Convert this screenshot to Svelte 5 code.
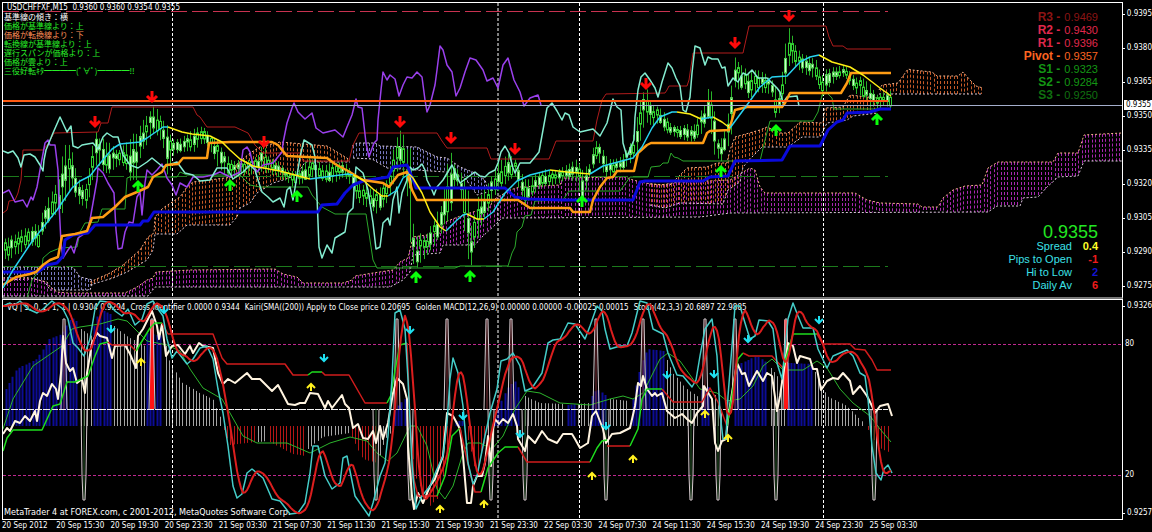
<script lang="ts">
	type Point = number[];

	const PITCH = 3.38;
	const LAST_BAR = 892;

	const prices = [
		"0.9395", "0.9380", "0.9365", "0.9350", "0.9335",
		"0.9320", "0.9305", "0.9290", "0.9275"
	];

	const times = [
		"20 Sep 2012", "20 Sep 15:30", "20 Sep 19:30", "20 Sep 23:30",
		"21 Sep 03:30", "21 Sep 07:30", "21 Sep 11:30", "21 Sep 15:30",
		"21 Sep 19:30", "21 Sep 23:30", "22 Sep 03:30", "24 Sep 07:30",
		"24 Sep 11:30", "24 Sep 15:30", "24 Sep 19:30", "24 Sep 23:30",
		"25 Sep 03:30"
	];

	const signals = [
		{ text: "基準線の傾き：横", tone: "flat" },
		{ text: "価格が基準線より：上", tone: "up" },
		{ text: "価格が転換線より：下", tone: "down" },
		{ text: "転換線が基準線より：上", tone: "up" },
		{ text: "遅行スパンが価格より：上", tone: "up" },
		{ text: "価格が雲より：上", tone: "up" },
		{ text: "三役好転ｷﾀ━━━━(ﾟ∀ﾟ)━━━━!!", tone: "up" }
	];

	const pivots = [
		{ name: "R3", value: "0.9469", tone: "r3" },
		{ name: "R2", value: "0.9430", tone: "r" },
		{ name: "R1", value: "0.9396", tone: "r" },
		{ name: "Pivot", value: "0.9357", tone: "pivot" },
		{ name: "S1", value: "0.9323", tone: "s" },
		{ name: "S2", value: "0.9284", tone: "s" },
		{ name: "S3", value: "0.9250", tone: "s3" }
	];

	const stats = [
		{ name: "Spread", value: "0.4", tone: "yellow" },
		{ name: "Pips to Open", value: "-1", tone: "red" },
		{ name: "Hi to Low", value: "2", tone: "blue" },
		{ name: "Daily Av", value: "6", tone: "red" }
	];

	const indicators = [
		"VQ | 5, 0, 2, 1, 1 | 0.9304 0.9294",
		"Cross Identifier 0.0000 0.9344",
		"Kairi(SMA((200)) Apply to Close price 0.20695",
		"Golden MACD(12,26,9) 0.00000 0.00000 -0.00025 0.00015",
		"Stoch(42,3,3) 20.6897 22.9885"
	];

	const days = [172.5, 498, 579.5, 823.5];

	// "x,y x,y" -> [[x, y], ...]
	const parse = (s: string): Point[] =>
		s.trim().split(/\s+/).map((p) => p.split(",").map(Number));

	// linear interpolation of column k at x
	function at(points: Point[], x: number, k = 1) {
		if (x <= points[0][0]) return points[0][k];
		for (let i = 1; i < points.length; i++) {
			const a = points[i - 1];
			const b = points[i];
			if (x <= b[0]) {
				return a[k] + ((b[k] - a[k]) * (x - a[0])) / (b[0] - a[0] || 1);
			}
		}
		return points[points.length - 1][k];
	}

	const noise = (n: number) => {
		const v = Math.sin(n * 12.9898) * 43758.5453;
		return v - Math.floor(v);
	};

	const snap = (n: number) => Math.floor(n) + 0.5;

	const upper = "3,213 7,210 9,201 15,200 18,193 21,180 23,150 43,150 48,144 54,133 98,132 101,123 108,123 112,107 193,107 197,115 200,117 207,127 235,127 248,133 251,138 255,145 263,153 301,153 303,161 349,161 353,145 359,133 437,133 442,141 447,148 487,148 491,159 549,159 556,141 593,141 597,120 602,100 606,94 665,93 667,90 669,86 687,86 689,80 693,53 743,53 749,26 826,26 829,37 833,46 843,46 847,49 891,49";
	const lower = "27,298 32,280 38,272 42,268 43,258 50,252 60,248 77,247 80,232 85,223 98,222 102,209 125,209 127,178 130,177 177,177 180,172 187,175 240,175 250,185 260,187 308,187 312,195 322,207 335,214 366,214 370,240 373,260 377,268 455,268 460,266 508,266 512,253 515,247 517,232 522,227 525,216 531,215 535,201 563,200 569,191 620,191 630,177 648,177 651,167 660,166 663,163 668,163 671,153 674,157 678,158 683,161 760,161 765,140 770,121 813,121 818,112 822,95 827,93 832,98 834,109 891,109";
	const kijun = "3,285 16,277 30,274 36,272 43,265 50,260 58,257 62,236 75,234 87,231 92,218 103,217 115,207 125,197 137,192 148,187 153,177 162,172 166,165 178,164 183,158 207,158 209,143 230,142 272,142 278,145 287,156 327,158 335,164 348,171 363,180 383,183 389,187 398,175 407,172 412,190 417,200 518,200 530,208 570,208 573,212 590,212 593,200 600,187 607,178 613,177 617,171 634,171 638,153 647,145 651,143 703,143 707,133 710,131 729,130 735,110 747,107 782,107 785,103 790,93 841,93 847,83 851,73 891,73";
	const slow = "3,272 38,272 47,265 57,263 63,256 65,240 73,235 88,233 95,225 140,225 143,221 148,221 154,212 318,212 322,205 337,204 345,193 353,185 363,181 388,177 393,167 407,165 412,177 416,188 505,188 515,197 527,199 563,200 633,200 640,182 645,181 703,181 710,177 728,176 735,161 782,160 790,146 820,146 828,130 837,122 843,120 847,113 870,112 880,109 891,109";
	const aqua = "3,151 8,153 13,151 18,158 21,167 24,155 30,154 35,157 40,165 43,171 44,160 46,150 53,133 60,117 67,132 71,126 73,146 78,148 82,145 93,143 98,149 103,137 107,133 113,137 118,137 121,148 123,155 130,165 138,168 147,162 152,158 163,167 177,162 185,173 193,175 200,181 210,180 217,168 227,168 233,179 243,172 250,165 255,170 258,180 262,192 268,197 273,202 280,198 284,207 287,190 290,187 293,200 295,188 300,157 304,140 312,145 315,157 317,197 319,247 322,258 327,245 332,253 335,238 345,232 348,213 353,208 354,190 356,167 363,173 368,190 373,223 376,249 380,247 383,223 388,218 390,225 393,200 397,187 399,213 402,193 407,180 410,167 413,170 418,168 422,164 425,170 427,180 432,190 434,195 437,187 443,180 452,165 460,183 468,177 475,172 480,176 485,177 489,173 495,170 498,163 501,152 505,146 509,153 513,168 515,173 520,163 530,163 535,157 539,152 543,130 547,108 552,103 557,111 562,120 565,113 569,115 573,127 580,132 593,129 600,136 607,123 611,107 613,99 617,107 621,110 623,143 627,157 630,149 634,140 635,117 638,90 641,77 645,73 650,80 655,88 658,97 662,82 668,63 672,68 676,78 680,86 683,110 686,112 690,97 692,73 695,46 700,48 705,65 708,57 712,59 718,59 722,68 725,67 728,86 733,78 738,82 743,73 747,75 752,70 758,78 767,78 777,88 780,92 783,103 787,97 797,96 799,106";
	const chikou = "3,193 9,190 15,202 23,200 27,207 31,197 33,200 37,187 40,170 45,143 48,140 50,145 55,145 58,170 59,203 61,243 63,258 68,250 71,246 74,253 78,238 87,232 90,220 93,203 97,180 98,168 103,173 108,183 114,193 116,230 118,249 122,248 125,232 129,222 133,223 137,197 140,192 142,215 145,183 147,170 152,175 157,170 162,164 167,178 172,185 176,195 180,183 187,187 193,177 203,177 213,175 220,172 230,177 240,172 243,150 247,147 250,152 253,165 257,172 263,165 273,163 282,152 283,143 287,123 292,108 294,103 298,112 305,119 312,113 316,128 323,133 335,130 343,137 347,127 352,115 356,99 358,107 362,108 366,143 369,157 374,143 377,140 378,120 381,90 383,72 387,80 390,75 395,79 399,96 403,85 407,77 412,78 417,72 422,77 425,100 427,112 430,105 435,85 437,70 440,46 443,50 447,65 452,72 456,96 460,88 465,72 470,58 476,60 483,70 487,81 493,78 498,88 503,65 508,58 514,80 520,92 524,106 530,98 538,95 541,105";

	const average = [
		["cyan", "3,288 13,270 33,240 57,210 72,188 80,181 90,176 97,167 112,149 120,144 140,142 147,138 163,127 168,127"],
		["yellow", "168,127 182,132 192,134 210,136 222,142 230,150 240,159 253,166 280,171 310,179"],
		["cyan", "310,179 325,177 348,174 353,175"],
		["yellow", "353,175 363,180 373,189 382,196 388,196"],
		["cyan", "388,196 397,190 403,178 409,174"],
		["yellow", "409,174 413,178 422,193 430,212 440,227 446,231"],
		["cyan", "446,231 457,220 463,215 467,214"],
		["yellow", "467,214 477,219 484,219"],
		["cyan", "484,219 493,212 505,193 517,181 530,175 550,170"],
		["yellow", "550,170 567,172 590,174"],
		["cyan", "590,174 603,166 633,158 642,147 652,128 660,117 672,112 677,112"],
		["yellow", "677,112 690,114 701,119"],
		["cyan", "701,119 713,117"],
		["yellow", "713,117 722,122 730,128"],
		["cyan", "730,128 747,105 760,87 772,77 787,76 800,62 810,57 819,55"],
		["yellow", "819,55 832,62 850,67 863,75 880,88 891,96"]
	];

	const clouds = [
		{
			kind: "lavender",
			top: "3,267 73,267 80,277 93,280",
			bottom: "3,280 35,279 45,282 50,290 90,290 93,282"
		},
		{
			kind: "purple",
			top: "3,278 30,278 47,282 50,287 57,292 67,293 125,293 137,287 147,280 153,278 156,272 190,270 275,269 283,274 297,277 303,283 343,283 352,280 355,276 373,273 393,270 400,262 408,258 413,237 440,233 445,222 463,215 480,210 490,207 493,200 510,190 520,187 560,185 563,178 625,177 633,180 645,183 660,185 680,182 730,180 735,177 750,168 755,170 760,187 765,193 855,193 867,200 880,203 918,204 922,207 938,207 943,198 953,190 965,186 982,185 988,168 998,162 1053,162 1058,153 1078,153 1084,135 1122,133",
			bottom: "3,296 148,296 155,287 390,287 403,280 410,272 413,255 440,253 443,245 475,245 482,237 497,223 502,218 700,217 730,213 985,212 988,212 997,206 1020,206 1023,198 1038,197 1047,187 1055,180 1057,177 1078,176 1084,161 1122,161"
		},
		{
			kind: "orange",
			top: "90,282 110,273 123,265 140,250 148,237 154,233 155,217 163,208 180,197 187,187 193,182 233,177 236,165 250,153 260,147 280,142 327,146 337,152 350,160",
			bottom: "90,285 113,278 127,272 147,260 153,250 155,234 177,234 187,225 230,225 237,217 240,208 250,203 257,193 273,183 283,180 297,175 305,162 350,162"
		},
		{
			kind: "lavender",
			top: "352,146 357,143 375,143 380,146 417,147 437,157 447,158 460,167 475,173 485,180 488,190",
			bottom: "353,158 372,159 387,168 430,171 447,172 465,178 477,195 488,192"
		},
		{
			kind: "orange",
			top: "650,184 670,185 678,177 687,168 707,167 717,163 727,163 730,150 735,137 760,130 767,127 780,133 788,133 800,122 823,123 825,108 843,107 850,95 867,97 878,98",
			bottom: "650,205 665,208 680,203 723,204 728,190 740,182 743,167 752,157 762,147 788,147 802,137 820,137 827,123 847,120 853,116 878,113"
		},
		{
			kind: "orange",
			top: "879,90 882,85 898,83 908,69 912,70 932,72 937,76 958,76 963,72 970,80 976,86 983,88",
			bottom: "879,94 983,94"
		}
	].map((c) => {
		const top = parse(c.top);
		const bottom = parse(c.bottom);
		const bars = [];
		for (let x = top[0][0] + 1; x <= top[top.length - 1][0]; x += PITCH) {
			bars.push(`M${snap(x)} ${at(top, x).toFixed(1)}V${at(bottom, x).toFixed(1)}`);
		}
		return { ...c, bars: bars.join("") };
	});

	// x,high,low of the price band
	const band = parse(
		"5,240,258 10,237,259 15,236,254 20,232,252 25,230,248 30,228,246 35,225,245 40,226,248 42,215,235 46,205,226 50,195,220 55,190,212 58,178,215 61,185,217 63,150,210 67,148,195 72,150,185 77,175,200 82,185,205 87,185,209 91,160,190 95,133,165 100,140,165 104,142,172 110,145,172 115,150,168 120,150,165 125,145,165 130,140,178 137,135,180 141,125,150 147,118,145 152,108,135 155,108,132 160,115,138 165,125,150 168,130,180 173,140,155 180,140,152 187,135,150 195,130,150 203,127,142 210,135,148 217,140,165 222,150,170 228,158,175 233,162,178 240,160,174 250,160,175 260,155,172 263,145,170 270,160,173 277,160,175 285,170,180 293,172,186 300,170,184 308,160,178 315,160,175 322,165,180 330,165,182 338,163,180 345,162,176 352,172,186 357,180,200 362,185,203 368,188,206 373,190,210 378,190,212 383,185,208 388,180,200 392,160,190 396,140,170 400,133,165 405,140,180 408,155,200 411,150,240 414,225,262 416,240,270 420,235,262 425,238,258 430,230,250 437,215,240 442,205,230 446,180,220 450,150,215 454,165,185 458,170,185 462,175,200 466,180,245 469,200,262 471,230,264 474,220,250 478,200,235 483,195,220 488,185,210 493,175,200 497,165,190 503,160,185 509,155,180 515,160,175 520,170,190 525,180,205 530,180,198 537,175,190 545,170,185 552,172,185 560,170,182 568,165,178 576,160,180 583,170,200 590,165,175 594,145,165 598,140,155 603,150,172 608,160,178 613,160,172 620,158,172 628,150,165 634,135,158 638,115,150 642,95,130 647,90,120 652,105,125 660,108,122 665,115,132 672,125,135 680,127,138 687,125,140 693,128,142 700,115,135 705,105,125 709,85,115 714,105,150 718,140,158 722,140,160 727,125,145 731,95,140 735,58,85 740,65,90 745,70,88 750,75,100 757,70,90 765,75,92 772,80,95 776,90,118 780,95,110 784,60,95 787,38,75 790,28,60 795,45,65 802,55,72 810,58,75 817,62,80 822,78,97 827,70,90 835,68,80 845,66,76 855,78,92 862,78,95 870,85,105 877,95,108 885,93,105 891,92,108"
	);

	const candles = [];
	for (let i = 0, x = 5; x <= LAST_BAR; i++, x += PITCH) {
		const high = at(band, x, 1);
		const low = at(band, x, 2);
		const range = low - high;
		const top = high + range * (0.15 + 0.3 * noise(i));
		const height = Math.max(2, range * (0.2 + 0.35 * noise(i + 500)));
		candles.push({
			x: snap(x),
			high: high - range * 0.1 * noise(i + 90),
			low: low + range * 0.1 * noise(i + 40),
			top,
			height,
			bear: noise(i + 900) > 0.5
		});
	}

	const sells = parse("95,122 152,97 264,142 400,122 451,138 515,149 646,84 735,43 789,16");
	const buys = parse("138,186 230,185 297,196 416,277 470,276 582,201 721,171 776,130 877,119");

	const histogram = [
		["blue", "6,389 17,369 37,359 50,339 62,334 70,320 75,318 79,324"],
		["grey", "81,329 92,336"],
		["blue", "94,326 100,309 111,314"],
		["grey", "114,326 127,336 145,346"],
		["blue", "147,333 163,336"],
		["grey", "166,346 170,363 183,383 200,393 213,399 221,419"],
		["red", "224,430 230,445 255,442"],
		["grey", "258,442 268,441"],
		["red", "270,442 293,454 306,456"],
		["grey", "308,449 323,437 350,433"],
		["red", "352,437 363,459 378,463"],
		["grey", "380,455 385,440 393,430"],
		["blue", "395,409 408,396"],
		["red", "410,440 417,480 430,506 438,498 443,480 450,450"],
		["blue", "456,421 463,421"],
		["red", "468,440 471,450 477,476 483,449 490,430"],
		["blue", "495,416 507,389 515,381 522,393"],
		["grey", "525,396 540,403 565,404"],
		["blue", "568,405 576,404"],
		["grey", "578,404 589,403"],
		["blue", "592,396 597,389 607,396"],
		["grey", "610,399 630,401"],
		["blue", "633,399 642,363 648,349 664,351"],
		["grey", "667,360 673,373 687,389 700,398"],
		["blue", "702,389 712,386"],
		["grey", "715,395 725,420"],
		["blue", "735,366 757,356 768,363"],
		["grey", "771,368 785,385"],
		["blue", "788,363 812,364"],
		["grey", "815,372 827,396 847,406 865,424"],
		["red", "868,430 880,448 891,453"]
	].map(([kind, line]) => {
		const points = parse(line);
		let d = "";
		for (let x = points[0][0]; x <= points[points.length - 1][0]; x += PITCH) {
			d += `M${snap(x)} 426V${at(points, x).toFixed(1)}`;
		}
		return { kind, d };
	});

	const spikesUp = [64, 152, 397, 447, 487, 511, 596, 643, 705, 735, 786];
	const spikesHot = [152, 786];
	const spikesDown = [84, 376, 410, 491, 525, 606, 691, 718, 776, 874];

	const cream = "3,434 7,428 10,431 15,421 20,423 25,416 30,421 35,411 37,421 40,401 43,393 47,396 52,384 56,389 58,399 61,373 63,336 66,363 70,371 73,368 77,383 82,379 85,393 87,373 92,343 97,333 100,336 107,338 112,358 115,346 125,345 130,354 136,368 138,336 143,329 148,319 152,311 157,326 159,339 162,324 166,356 172,346 178,345 185,354 190,346 193,353 199,343 203,346 213,348 218,373 223,384 228,379 235,383 247,373 252,379 260,379 272,391 278,385 288,404 295,405 300,403 305,403 310,393 318,394 325,408 328,401 332,408 342,395 345,404 349,408 353,428 358,424 363,438 368,439 373,431 376,443 380,426 383,439 388,423 393,393 397,378 403,384 407,399 408,446 412,496 414,509 418,493 423,503 430,486 435,479 443,456 447,413 453,416 460,429 463,456 467,503 471,503 473,486 477,476 482,476 485,463 488,436 491,466 493,429 495,419 499,424 503,419 508,423 513,414 517,426 518,439 525,451 528,436 535,443 542,431 548,439 557,443 563,434 572,434 575,439 580,448 588,443 592,416 596,411 603,429 606,443 612,434 620,433 630,428 635,406 638,383 641,386 643,376 647,389 652,396 655,393 657,396 662,393 667,411 675,418 682,414 687,419 692,423 697,413 703,406 704,386 712,399 715,443 718,451 722,441 726,439 728,419 732,393 737,363 742,374 745,373 749,386 757,371 763,381 767,373 772,376 777,411 780,396 783,376 788,343 793,346 797,363 800,356 810,359 813,369 817,369 821,390 827,381 833,378 838,379 843,373 850,381 853,394 860,386 867,396 872,406 875,413 880,406 888,404 892,416";
	const stochMain = "3,306 10,303 13,306 20,301 28,309 37,313 43,309 52,301 63,309 68,319 73,343 78,348 84,356 90,339 95,309 100,301 108,302 115,311 122,316 128,309 135,325 142,319 147,304 153,301 158,309 163,316 167,339 172,358 177,351 187,364 193,359 200,348 207,346 213,359 218,389 223,413 228,446 233,486 237,498 242,494 247,473 252,469 263,478 272,499 280,501 290,514 298,513 305,503 310,473 313,446 318,446 325,476 332,489 340,483 343,458 347,456 351,476 355,496 362,506 369,516 373,503 380,476 385,463 388,436 392,379 395,313 400,310 405,329 408,379 412,463 416,509 422,496 430,486 437,469 443,456 447,423 450,379 453,358 458,373 463,406 468,463 473,484 477,476 485,436 490,413 497,389 501,361 507,359 513,353 520,366 525,391 532,388 542,373 548,343 553,340 560,339 568,323 575,324 585,339 590,326 597,306 602,311 605,329 610,349 620,346 627,346 632,333 637,313 640,301 647,303 653,329 663,334 668,353 677,375 683,376 692,387 696,380 700,356 705,329 712,319 717,356 720,413 723,439 726,439 728,396 732,346 735,306 740,306 745,323 750,339 755,336 759,320 768,321 773,329 777,363 782,379 785,349 788,319 793,303 798,316 803,328 813,328 818,349 827,368 833,356 847,350 853,356 860,373 865,376 868,399 872,446 876,473 881,480 884,469 888,465 892,473";
	const kairi = "3,429 13,399 33,366 62,346 72,329 80,327 100,324 118,319 127,321 147,341 167,345 180,351 190,369 203,388 222,399 230,413 243,436 257,443 287,443 310,453 330,443 350,437 367,441 377,453 388,461 397,453 410,426 417,426 427,446 437,489 445,499 453,486 463,453 468,443 480,443 492,449 503,436 515,409 527,391 540,393 560,403 590,405 610,399 623,396 633,399 643,393 660,359 668,353 680,361 700,389 717,393 727,401 740,399 753,386 763,366 772,359 783,370 803,370 817,361 827,368 840,389 853,403 870,416 880,429 891,442";

	// signal line: the main line averaged over the last three bars
	const main = parse(stochMain);
	let stochSignal = "";
	for (let x = 3; x <= LAST_BAR; x += 2) {
		const mean = [1, 4, 7, 10].reduce((sum, lag) => sum + at(main, x - lag), 0) / 4;
		stochSignal += `${x},${mean.toFixed(1)} `;
	}

	const quality = [
		["green", "3,451 7,438 13,430 42,430 53,406 60,404 67,382 75,382 88,376 95,356 100,344 108,342"],
		["red", "108,342 112,345 130,345 136,351"],
		["green", "136,351 150,328 155,323 162,323"],
		["red", "162,323 168,334 213,334 222,358 227,364 285,364 293,375 308,375"],
		["green", "308,375 312,372 322,372"],
		["red", "322,372 325,375 349,375 365,403 387,403"],
		["green", "387,403 391,395 395,370 400,345 407,343"],
		["red", "407,343 410,420 414,480 418,496 437,496"],
		["green", "437,496 445,476 452,436 460,428"],
		["red", "460,428 467,460 475,492 481,492"],
		["green", "481,492 488,468 498,453 505,447 518,447"],
		["red", "518,447 527,462 590,462"],
		["green", "590,462 597,448 602,441 607,440"],
		["red", "607,446 630,446"],
		["green", "630,446 638,429 642,399 647,389 662,389"],
		["red", "662,389 673,402 702,402 710,388 718,402 727,426"],
		["green", "727,426 735,376 738,359 743,353"],
		["red", "743,353 749,356 772,356 783,368"],
		["green", "783,368 793,334 817,334"],
		["red", "817,334 823,344 850,344 855,349 865,350 872,360 877,370 891,370"]
	];

	const exits = parse("111,329 164,310 324,358 410,330 463,416 520,434 606,426 667,375 714,374 748,339 819,320");
	const entries = parse("141,362 311,387 440,509 484,504 592,476 633,459 705,414 728,438");
</script>

<main class="terminal">
	<section class="pane price">
		<div class="overlay header">
			<h1>USDCHFFXF,M15&nbsp; 0.9360 0.9360 0.9354 0.9355</h1>
			<ul>
				{#each signals as signal}
					<li class={signal.tone}>{signal.text}</li>
				{/each}
			</ul>
		</div>

		<svg viewBox="3 3 1119 294" role="img" aria-label="USDCHF M15">
			{#each clouds as cloud}
				<g class="cloud {cloud.kind}">
					<path class="bars" d={cloud.bars} />
					<polyline class="edge top" points={cloud.top} />
					<polyline class="edge" points={cloud.bottom} />
				</g>
			{/each}

			<path class="resistance" d="M3 11.5H888" />
			<path class="support" d="M3 176.5H888M3 266.5H888" />

			{#each days as x}
				<path class="day" d="M{x} 3V297" />
			{/each}

			{#each candles as c}
				<path class="wick" d="M{c.x} {c.high}V{c.low}" />
				<rect class="body" class:bear={c.bear} x={c.x - 1} y={c.top} width="2" height={c.height} />
			{/each}

			<polyline class="line upper" points={upper} />
			<polyline class="line lower" points={lower} />
			<polyline class="line chikou" points={chikou} />
			<polyline class="line aqua" points={aqua} />
			<polyline class="line slow" points={slow} />
			<polyline class="line kijun" points={kijun} />
			{#each average as [tone, points]}
				<polyline class="line average {tone}" {points} />
			{/each}

			<path class="pivot-line" d="M3 101H888" />
			<path class="bid" d="M3 105.5H1122" />

			{#each sells as [x, y]}
				<path class="arrow sell" d="M{x} {y - 6}V{y + 4}M{x - 5} {y - 1}L{x} {y + 4}L{x + 5} {y - 1}" />
			{/each}
			{#each buys as [x, y]}
				<path class="arrow buy" d="M{x} {y + 6}V{y - 4}M{x - 5} {y + 1}L{x} {y - 4}L{x + 5} {y + 1}" />
			{/each}
		</svg>

		<dl class="overlay pivots">
			{#each pivots as pivot}
				<dt class={pivot.tone}>{pivot.name} -</dt>
				<dd class={pivot.tone}>{pivot.value}</dd>
			{/each}
		</dl>

		<div class="overlay quote">
			<strong>0.9355</strong>
			<dl>
				{#each stats as stat}
					<dt>{stat.name}</dt>
					<dd class={stat.tone}>{stat.value}</dd>
				{/each}
			</dl>
		</div>
	</section>

	<div class="axis prices">
		{#each prices as price}
			<span class="tick">{price}</span>
		{/each}
		<span class="tag">0.9355</span>
	</div>

	<section class="pane studies">
		<div class="overlay names">
			{#each indicators as name}
				<span>{name}</span>
			{/each}
		</div>

		<svg viewBox="3 300 1119 219" role="img" aria-label="Indicators">
			{#each histogram as bars}
				<path class="hist {bars.kind}" d={bars.d} />
			{/each}

			<path class="level" d="M3 344.5H1122M3 475.5H1122" />
			<path class="zero" d="M3 409.5H888" />
			{#each days as x}
				<path class="day" d="M{x} 300V519" />
			{/each}

			<polyline class="line kairi" points={kairi} />
			{#each spikesUp as x}
				<path class="core" class:hot={spikesHot.includes(x)} d="M{x} 320V409" />
				<path class="spike" d="M{x - 3} 409L{x - 2} 365L{x - 1} 319H{x + 1}L{x + 2} 365L{x + 3} 409" />
			{/each}
			{#each spikesDown as x}
				<path class="core down" d="M{x} 409V499" />
				<path class="spike" d="M{x - 3} 409L{x - 2} 475L{x - 1} 500H{x + 1}L{x + 2} 475L{x + 3} 409" />
			{/each}

			<polyline class="line cream" points={cream} />
			{#each quality as [tone, points]}
				<polyline class="line quality {tone}" {points} />
			{/each}
			<polyline class="line stoch" points={stochMain} />
			<polyline class="line signal" points={stochSignal} />

			{#each exits as [x, y]}
				<path class="mark exit" d="M{x} {y - 4}V{y + 3}M{x - 4} {y - 1}L{x} {y + 3}L{x + 4} {y - 1}" />
			{/each}
			{#each entries as [x, y]}
				<path class="mark entry" d="M{x} {y + 4}V{y - 3}M{x - 4} {y + 1}L{x} {y - 3}L{x + 4} {y + 1}" />
			{/each}
		</svg>

		<p class="overlay copyright">
			MetaTrader 4 at FOREX.com, c 2001-2012, MetaQuotes Software Corp.
		</p>
	</section>

	<div class="axis levels">
		<div>
			<span class="tick">0.9326</span>
			<span>80</span>
		</div>
		<div>
			<span>20</span>
			<span class="tick">0.9257</span>
		</div>
	</div>

	<footer>
		{#each times as time}
			<time>{time}</time>
		{/each}
	</footer>
</main>

<style>
	:global(body) {
		margin: 0;
		background: #000;
	}

	.terminal {
		display: grid;
		grid-template-columns: 1fr 29px;
		padding: 2px 0 0 2px;
		background: #000;
		color: #fff;
		font-family: "DejaVu Sans Condensed", "Liberation Sans", sans-serif;
		font-size: 8px;
		line-height: 12px;
	}

	.pane {
		position: relative;
		border: 1px solid #fff;
		overflow: hidden;

		&.price {
			border-bottom: 2px solid #777;
		}
	}

	svg {
		position: relative;
		display: block;
		width: 100%;
		height: auto;
	}

	.overlay {
		position: absolute;
		margin: 0;
		white-space: nowrap;
	}

	.header {
		top: 0;
		left: 1px;

		h1 {
			margin: 0;
			padding-left: 3px;
			font-size: 8px;
			font-weight: normal;
			line-height: 9px;
		}

		ul {
			margin: 0;
			padding: 0;
			list-style: none;
			font-family: "Noto Sans CJK JP", sans-serif;
			line-height: 9px;
		}

		.up {
			color: #28f028;
		}

		.down {
			color: #ff9058;
		}
	}

	.pivots {
		top: 8px;
		right: 24px;
		display: grid;
		grid-template-columns: auto auto;
		column-gap: 4px;
		font-family: "Liberation Sans", sans-serif;
		font-size: 11px;
		line-height: 13px;
		text-align: right;

		dt {
			font-size: 12px;
			font-weight: bold;
		}

		.r3 {
			color: #8c1414;
		}

		.r {
			color: #e0284c;
		}

		.pivot {
			color: #fc6420;
		}

		.s {
			color: #149614;
		}

		.s3 {
			color: #107010;
		}
	}

	dd {
		margin: 0;
	}

	.quote {
		right: 24px;
		bottom: 5px;
		font-family: "Liberation Sans", sans-serif;
		font-size: 11px;
		line-height: 13px;
		text-align: right;

		strong {
			display: block;
			color: #22e622;
			font-size: 18px;
			font-weight: normal;
			line-height: 16px;
		}

		dl {
			display: grid;
			grid-template-columns: 1fr 26px;
			margin: 0;
			color: #3ce0e8;
		}

		dd {
			font-weight: bold;
		}

		.yellow {
			color: #ffff28;
		}

		.red {
			color: #f01c1c;
		}

		.blue {
			color: #1414d2;
		}
	}

	.names {
		top: 2px;
		left: 4px;
		display: flex;
		gap: 5px;
	}

	.copyright {
		bottom: 1px;
		left: 1px;
		font-size: 9px;
	}

	.axis {
		display: flex;
		flex-direction: column;
		justify-content: space-between;

		span {
			display: flex;
			align-items: center;
			gap: 2px;
			padding-left: 2px;
		}

		.tick {
			padding-left: 0;
		}

		.tick::before {
			content: "";
			width: 2px;
			height: 1px;
			background: #fff;
		}
	}

	.prices {
		position: relative;
		padding: 6px 0 7px;

		.tag {
			position: absolute;
			top: 98px;
			left: 1px;
			right: 0;
			background: #fff;
			color: #000;
			line-height: 10px;
		}
	}

	.levels {
		padding: 1px 0;

		div {
			display: grid;
			gap: 26px;
		}
	}

	footer {
		display: grid;
		grid-template-columns: repeat(17, 1fr);
		width: 80vw;
		white-space: nowrap;
	}

	svg * {
		fill: none;
	}

	.day {
		stroke: #fff;
		stroke-dasharray: 3 2;
	}

	.line {
		stroke-linejoin: round;
	}

	.resistance {
		stroke: #c83250;
		stroke-dasharray: 16 5;
	}

	.support {
		stroke: #1c7a1c;
		stroke-dasharray: 16 5;
	}

	.pivot-line {
		stroke: #ff5a14;
		stroke-width: 2;
	}

	.bid {
		stroke: #a4aecb;
	}

	.cloud {
		.bars {
			stroke-dasharray: 3 2;
		}

		.edge {
			stroke: #d8c8d8;
			stroke-dasharray: 2 2;
		}

		&.orange {
			stroke: #c45a28;
		}

		&.orange .top,
		&.purple .top {
			stroke: #f4b088;
		}

		&.purple {
			stroke: #a828b0;
		}

		&.lavender {
			stroke: #7878c0;
		}
	}

	.wick {
		stroke: #28b428;
	}

	.body {
		fill: #000;
		stroke: #32d232;

		&.bear {
			fill: #c8ffc8;
			stroke: #5ad25a;
		}
	}

	.upper {
		stroke: #b01c1c;
	}

	.lower {
		stroke: #2ca82c;
	}

	.chikou {
		stroke: #9a40ec;
		stroke-width: 1.5;
	}

	.aqua {
		stroke: #84ecd0;
		stroke-width: 1.5;
	}

	.slow {
		stroke: #0a0adc;
		stroke-width: 3;
	}

	.kijun {
		stroke: #ff9c14;
		stroke-width: 2.5;
	}

	.average {
		stroke-width: 1.5;

		&.cyan {
			stroke: #28d2f0;
		}

		&.yellow {
			stroke: #ffee14;
		}
	}

	.arrow {
		stroke-width: 3;

		&.sell {
			stroke: #ff0a0a;
		}

		&.buy {
			stroke: #0aff0a;
		}
	}

	.hist {
		&.blue {
			stroke: #0c0c96;
			stroke-width: 2;
		}

		&.grey {
			stroke: #a4a4a4;
		}

		&.red {
			stroke: #b41616;
		}
	}

	.level {
		stroke: #c02890;
		stroke-dasharray: 3 2;
	}

	.zero {
		stroke: #f0f0f0;
		stroke-dasharray: 7 1;
	}

	.kairi {
		stroke: #2cb42c;
	}

	.spike {
		stroke: #d8ccd0;
	}

	.core {
		stroke: #803038;

		&.hot {
			stroke: #ff1414;
			stroke-width: 4;
		}

		&.down {
			stroke: #285a28;
		}
	}

	.cream {
		stroke: #fff4e0;
		stroke-width: 2;
	}

	.quality {
		stroke-width: 1.5;

		&.green {
			stroke: #1edc1e;
		}

		&.red {
			stroke: #d01c1c;
		}
	}

	.stoch {
		stroke: #44ccc8;
		stroke-width: 1.5;
	}

	.signal {
		stroke: #dc1e1e;
		stroke-width: 2;
	}

	.mark {
		stroke-width: 2;

		&.exit {
			stroke: #1ee0f0;
		}

		&.entry {
			stroke: #fff01e;
		}
	}
</style>
